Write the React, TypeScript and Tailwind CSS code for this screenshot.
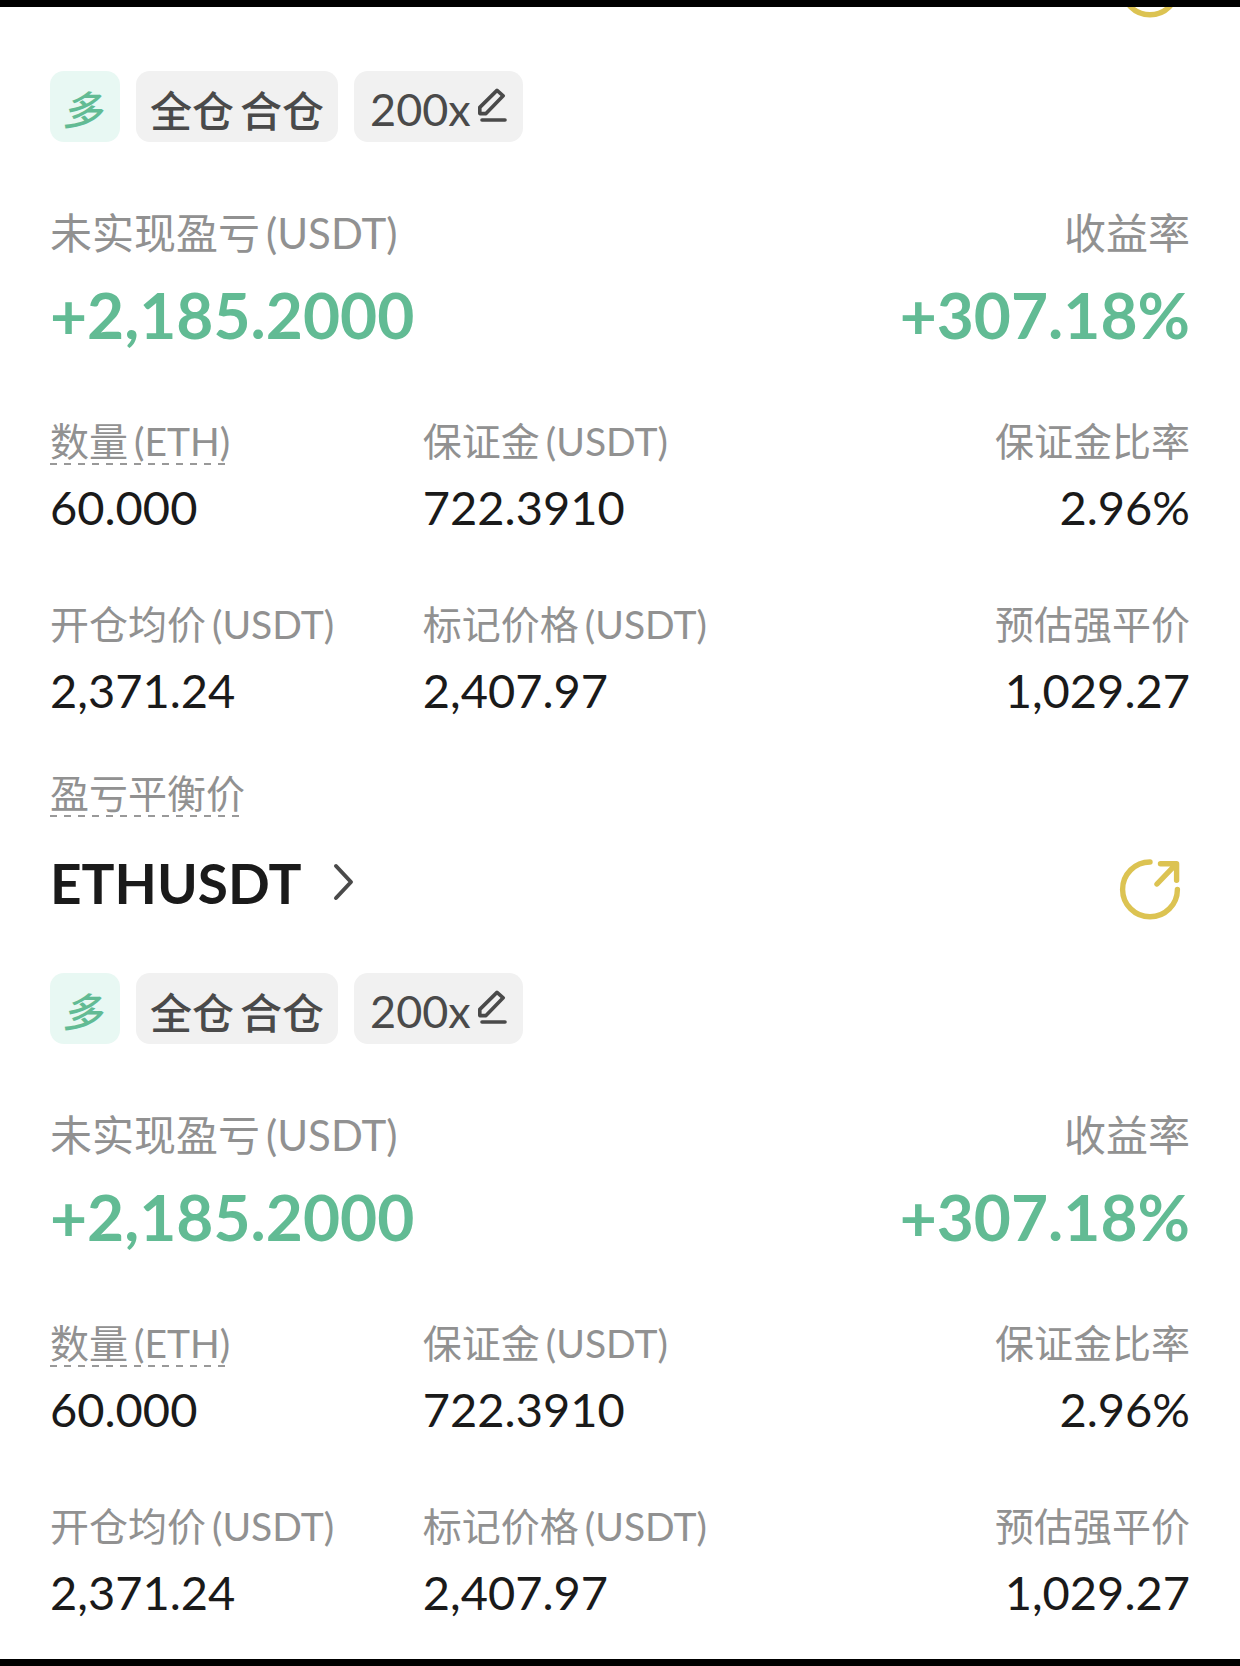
import clsx from 'clsx'

interface FieldProps {
  label: string
  unit?: string
  value?: string
  dashed?: boolean
  alignRight?: boolean
}

interface Position {
  symbol: string
  pnl: string
  roi: string
  leverage: string
  fields: FieldProps[]
}

const POSITION: Position = {
  symbol: 'ETHUSDT',
  pnl: '+2,185.2000',
  roi: '+307.18%',
  leverage: '200x',
  fields: [
    { label: '数量', unit: '(ETH)', value: '60.000', dashed: true },
    { label: '保证金', unit: '(USDT)', value: '722.3910' },
    { label: '保证金比率', value: '2.96%', alignRight: true },
    { label: '开仓均价', unit: '(USDT)', value: '2,371.24' },
    { label: '标记价格', unit: '(USDT)', value: '2,407.97' },
    { label: '预估强平价', value: '1,029.27', alignRight: true },
  ],
}

function ShareButton() {
  return (
    <button aria-label="分享" className="shrink-0 mr-2">
      <svg
        viewBox="0 0 64 64"
        className="w-16 h-16"
        fill="none"
        stroke="#dcc352"
        strokeWidth="5.4"
        strokeLinecap="round"
        strokeLinejoin="round"
      >
        <path d="M32 5A27.4 27.4 0 1 0 59.4 32.4" />
        <path d="M42.5 6.7H58.6V23.3M57.6 7.7 39 27" />
      </svg>
    </button>
  )
}

function EditIcon() {
  return (
    <svg
      viewBox="0 0 30 34"
      className="w-[30px] h-[34px]"
      fill="none"
      stroke="#4a4a4a"
      strokeWidth="3.6"
      strokeLinejoin="round"
      strokeLinecap="round"
    >
      <path d="M20 2.4 26.2 7.8 9 25.6H2.8V19.4Z" />
      <path d="M5 32H28" />
    </svg>
  )
}

function Field({ label, unit, value, dashed, alignRight }: FieldProps) {
  return (
    <div className={clsx('flex flex-col', alignRight ? 'items-end' : 'items-start')}>
      <div
        className={clsx(
          'flex gap-1.5 h-12 text-[39px] leading-[48px] text-[#919191] whitespace-nowrap',
          dashed &&
            'bg-[repeating-linear-gradient(90deg,#999_0_7px,transparent_7px_14px)] bg-[length:100%_2px] bg-bottom bg-no-repeat',
        )}
      >
        <span>{label}</span>
        {unit && <span>{unit}</span>}
      </div>
      {value && <div className="mt-4 text-[47px] leading-[52px] text-[#1a1a1a]">{value}</div>}
    </div>
  )
}

function CardHeader({ symbol }: { symbol: string }) {
  return (
    <div className="flex items-start justify-between h-16">
      <button className="flex items-center gap-8 text-[#1a1a1a]">
        <span className="text-[55px] leading-[52px] font-bold">{symbol}</span>
        <svg
          viewBox="0 0 22 40"
          className="w-[22px] h-10"
          fill="none"
          stroke="#4a4a4a"
          strokeWidth="4"
          strokeLinecap="round"
          strokeLinejoin="round"
        >
          <path d="M3 3 18 19 3 35" />
        </svg>
      </button>
      <ShareButton />
    </div>
  )
}

function CardBody({ position }: { position: Position }) {
  return (
    <>
      <div className="flex gap-4 text-[42px] text-[#4a4a4a]">
        <span className="h-[71px] pl-3 pr-[18px] pt-2 rounded-[14px] bg-[#e8f8f3] text-[40px] leading-[62px] font-medium italic text-[#62bb94]">
          多
        </span>
        <button className="flex gap-1.5 h-[71px] px-3.5 pt-2 rounded-[14px] bg-[#f1f1f1] leading-[64px] font-medium">
          <span>全仓</span>
          <span>合仓</span>
        </button>
        <button className="flex items-center gap-1.5 h-[71px] px-4 rounded-[14px] bg-[#f1f1f1]">
          <span className="pt-1 text-[45px] leading-[64px]">{position.leverage}</span>
          <span className="pb-1">
            <EditIcon />
          </span>
        </button>
      </div>

      <div className="flex justify-between mt-[65px]">
        <div>
          <div className="flex gap-1.5 text-[42px] leading-[52px] text-[#919191]">
            <span>未实现盈亏</span>
            <span>(USDT)</span>
          </div>
          <div className="mt-5 text-[64px] leading-[72px] font-bold text-[#62bb94]">{position.pnl}</div>
        </div>
        <div className="text-right">
          <div className="text-[42px] leading-[52px] text-[#919191]">收益率</div>
          <div className="mt-5 text-[64px] leading-[72px] font-bold text-[#62bb94]">{position.roi}</div>
        </div>
      </div>

      <div className="grid grid-cols-[32.7%_1fr_auto] gap-y-[67px] mt-[66px]">
        {position.fields.map(field => (
          <Field key={field.label} {...field} />
        ))}
      </div>
    </>
  )
}

export default function App() {
  return (
    <main className="min-h-screen bg-white border-y-[7px] border-black font-['Lato','Noto_Sans_CJK_SC',sans-serif]">
      <section className="px-[50px]">
        {/* header is scrolled under the top edge, only the end of the share ring shows */}
        <div className="flex items-end justify-end h-3 overflow-hidden">
          <ShareButton />
        </div>
        <div className="mt-[52px]">
          <CardBody position={POSITION} />
        </div>
        <div className="mt-[53px]">
          <Field label="盈亏平衡价" dashed />
        </div>
      </section>

      <section className="px-[50px] pt-10">
        <CardHeader symbol={POSITION.symbol} />
        <div className="mt-[52px]">
          <CardBody position={POSITION} />
        </div>
      </section>
    </main>
  )
}
